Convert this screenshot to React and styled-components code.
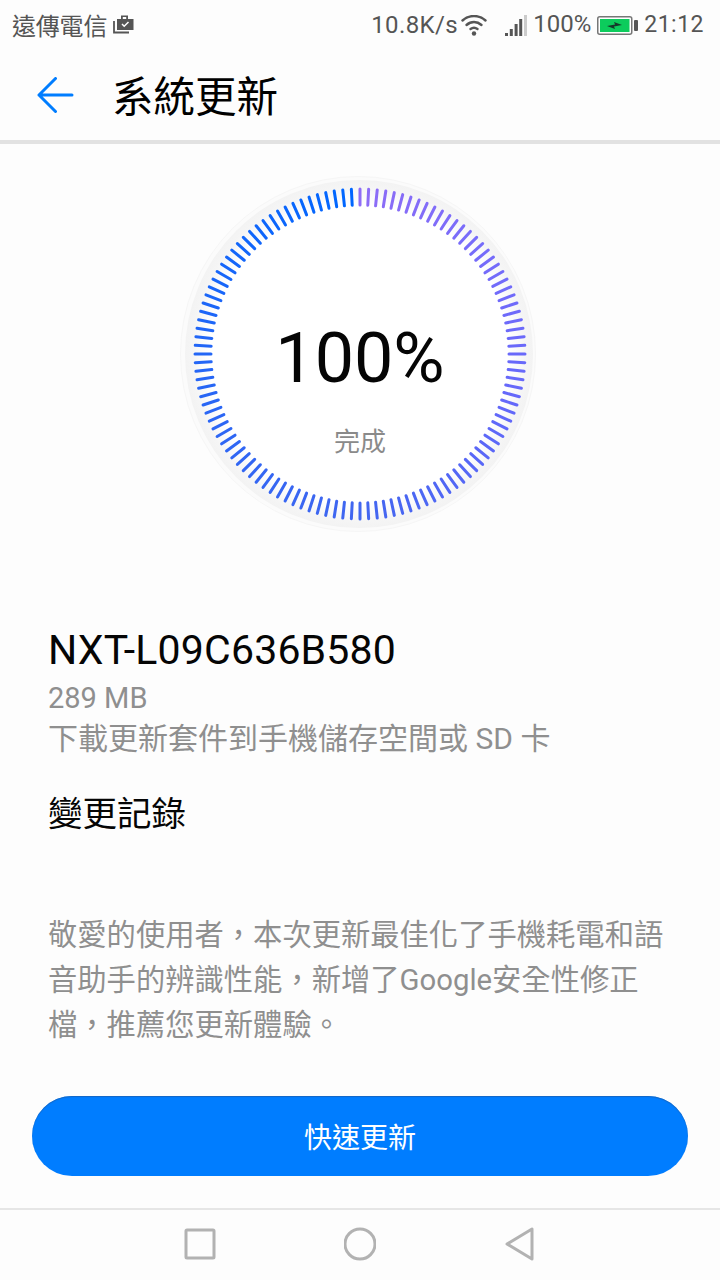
import React from 'react';
import styled, { createGlobalStyle } from 'styled-components';

const FONT = `"Noto Sans CJK TC", "Noto Sans CJK SC", Roboto, sans-serif`;

const Global = createGlobalStyle`
  html, body { margin: 0; padding: 0; background: #fdfdfd; }
  body { font-family: Roboto, ${FONT}; }
`;
const Screen = styled.div`
  width: 720px; height: 1280px; background: #fdfdfd; display: flex; flex-direction: column; overflow: hidden;
`;
const StatusBar = styled.div`
  height: 50px; padding: 0 16px 0 12px; display: flex; align-items: center; justify-content: space-between;
  color: #555; box-sizing: border-box;
`;
const StatusGroup = styled.div`display: flex; align-items: center; gap: 6px;`;
const Carrier = styled.span`font: 400 24px/50px ${FONT}; letter-spacing: -0.2px;`;
const StatusText = styled.span`
  font: 400 ${p => p.$size || 24}px/50px Roboto, sans-serif; letter-spacing: ${p => p.$ls || 0}px;
  margin-top: ${p => p.$mt || 0}px;
`;
const IconSlot = styled.span`display: flex; margin-left: ${p => p.$ml || 0}px;`;
const Header = styled.header`
  height: 90px; display: flex; align-items: center; padding: 0 0 0 36px; gap: 38px;
  border-bottom: 4px solid #e2e2e2;
`;
const Title = styled.h1`margin: 0; font: 400 41.5px/1 ${FONT}; color: #000;`;
const Main = styled.main`flex: 1; display: flex; flex-direction: column; padding: 30px 32px 0;`;
const GaugeWrap = styled.div`position: relative; width: 360px; height: 360px; align-self: center;`;
const GaugeCenter = styled.div`
  position: absolute; inset: 0; display: flex; flex-direction: column; align-items: center;
`;
const Percent = styled.div`font: 400 70px/1 Roboto, sans-serif; color: #050505; margin-top: 149px;`;
const Done = styled.div`font: 400 26px/1 ${FONT}; color: #8a8a8a; margin-top: 34px;`;
const Info = styled.section`display: flex; flex-direction: column; padding-left: 16px; margin-top: 91px;`;
const Version = styled.div`font: 400 41px/50px Roboto, sans-serif; letter-spacing: 0.2px; color: #050505;`;
const Size = styled.div`font: 400 29px/44px Roboto, sans-serif; color: #8f8f8f; margin-top: 1px;`;
const Hint = styled.div`font: 400 30px/44px Roboto, ${FONT}; color: #8f8f8f; margin-top: -3px;`;
const ChangeTitle = styled.div`font: 400 34.5px/40px ${FONT}; color: #050505; margin-top: 30px;`;
const Notes = styled.p`font: 400 29.3px/45px Roboto, ${FONT}; color: #8f8f8f; margin: 82px 0 0; width: 625px;`;
const PrimaryButton = styled.button`
  height: 80px; margin-top: 48px; border: 0; border-radius: 40px; background: #007dff;
  box-shadow: inset 0 1px 1px #1467c4; color: #fff; font: 400 28px/1 ${FONT}; width: 656px; flex-shrink: 0;
`;
const NavBar = styled.nav`
  height: 68px; padding-bottom: 2px; border-top: 2px solid #e6e6e6; display: flex; align-items: center; justify-content: center; gap: 128px;
`;
const NavIcon = styled.svg`width: 32px; height: 36px; fill: none; stroke: #b2b2b2; stroke-width: 3; stroke-linejoin: round;`;

const mix = (a, b, t) => a.map((v, i) => Math.round(v + (b[i] - v) * t));
const stops = [[0, [142, 108, 246]], [0.12, [120, 108, 250]], [0.3, [100, 104, 250]], [0.5, [66, 102, 240]], [0.75, [36, 102, 246]], [1, [0, 102, 255]]];
const colorAt = t => {
  for (let i = 1; i < stops.length; i++) {
    if (t <= stops[i][0]) {
      const [a, ca] = stops[i - 1]; const [b, cb] = stops[i];
      return `rgb(${mix(ca, cb, (t - a) / (b - a)).join(',')})`;
    }
  }
  return 'rgb(0,102,255)';
};

const Gauge = () => {
  const ticks = [];
  const n = 120;
  for (let i = 0; i < n; i++) {
    const ang = (i * 3 * Math.PI) / 180;
    const s = Math.sin(ang), c = Math.cos(ang);
    ticks.push(<line key={i} x1={180 + s * 149} y1={180 - c * 149} x2={180 + s * 165} y2={180 - c * 165}
      stroke={colorAt(i / (n - 1))} strokeWidth="3" strokeLinecap="round" />);
  }
  return (
    <svg width="360" height="360" viewBox="0 0 360 360">
      <defs>
        <radialGradient id="band" gradientUnits="userSpaceOnUse" cx="179" cy="180" r="174">
          <stop offset="0.86" stopColor="#ffffff" />
          <stop offset="0.96" stopColor="#f5f5f5" />
          <stop offset="1" stopColor="#f3f3f3" />
        </radialGradient>
      </defs>
      <circle cx="178" cy="180" r="177.5" fill="#fbfbfb" stroke="#f6f6f6" strokeWidth="1" />
      <circle cx="179" cy="180" r="174" fill="url(#band)" />
      {ticks}
    </svg>
  );
};

const Wifi = () => (
  <svg width="26" height="21" viewBox="0 0 26 21" fill="none" stroke="#555" strokeWidth="2.4" strokeLinecap="round">
    <path d="M1.5 5.5C8 -0.5 18 -0.5 24.5 5.5" />
    <path d="M5.5 10C10 6 16 6 20.5 10" />
    <path d="M9.5 14C11.5 12.5 14.5 12.5 16.5 14" />
    <circle cx="13" cy="18.5" r="2.2" fill="#555" stroke="none" />
  </svg>
);
const Signal = () => (
  <svg width="22" height="21" viewBox="0 0 22 21">
    <rect x="0" y="18" width="3" height="3" fill="#555" />
    <rect x="4.8" y="14" width="3" height="7" fill="#555" />
    <rect x="9.6" y="9" width="3" height="12" fill="#555" />
    <rect x="14.2" y="4" width="3" height="17" fill="#555" />
    <rect x="19" y="0" width="3" height="21" fill="#ccc" />
  </svg>
);
const Battery = () => (
  <svg width="41" height="19" viewBox="0 0 41 19">
    <rect x="0.75" y="0.75" width="34" height="17.5" rx="2" fill="#fff" stroke="#777" strokeWidth="1.5" />
    <rect x="3" y="3" width="29.5" height="13" fill="#0ccc5c" />
    <rect x="37" y="4" width="4" height="11" rx="1" fill="#555" />
    <path d="M10 10L18 8.5L17 6L25 9L17 10.6L18 13Z" fill="#16382a" />
  </svg>
);
const Briefcase = () => (
  <svg width="21" height="20" viewBox="0 0 21 20">
    <path d="M1 6V17.5H16" fill="none" stroke="#555" strokeWidth="1.8" />
    <path d="M4 4H8V0.5H15V4H20.5V15H4Z" fill="#555" />
    <path d="M9 9L11.2 11.2L15.5 7" fill="none" stroke="#fff" strokeWidth="1.5" />
    <rect x="9.8" y="2" width="3.4" height="2" fill="#fdfdfd" />
  </svg>
);
const Back = () => (
  <svg width="38" height="36" viewBox="0 0 38 36" fill="none" stroke="#007dff" strokeWidth="3" strokeLinecap="round" strokeLinejoin="round">
    <path d="M36 18H3M19.5 1.5L3 18L19.5 34.5" />
  </svg>
);

export default function App() {
  return (
    <Screen>
      <Global />
      <StatusBar>
        <StatusGroup>
          <Carrier>遠傳電信</Carrier>
          <Briefcase />
        </StatusGroup>
        <StatusGroup>
          <StatusText $ls={0.4}>10.8K/s</StatusText>
          <IconSlot $ml={-3}><Wifi /></IconSlot>
          <IconSlot $ml={12}><Signal /></IconSlot>
          <StatusText $mt={-3}>100%</StatusText>
          <Battery />
          <StatusText $size={23} $ls={0.5}>21:12</StatusText>
        </StatusGroup>
      </StatusBar>
      <Header>
        <Back />
        <Title>系統更新</Title>
      </Header>
      <Main>
        <GaugeWrap>
          <Gauge />
          <GaugeCenter>
            <Percent>100%</Percent>
            <Done>完成</Done>
          </GaugeCenter>
        </GaugeWrap>
        <Info>
          <Version>NXT-L09C636B580</Version>
          <Size>289 MB</Size>
          <Hint>下載更新套件到手機儲存空間或 SD 卡</Hint>
          <ChangeTitle>變更記錄</ChangeTitle>
          <Notes>敬愛的使用者，本次更新最佳化了手機耗電和語音助手的辨識性能，新增了Google安全性修正檔，推薦您更新體驗。</Notes>
        </Info>
        <PrimaryButton>快速更新</PrimaryButton>
      </Main>
      <NavBar>
        <NavIcon viewBox="0 0 32 36"><rect x="2" y="4" width="28" height="28" rx="1" /></NavIcon>
        <NavIcon viewBox="0 0 32 36"><circle cx="16" cy="18" r="15" /></NavIcon>
        <NavIcon viewBox="0 0 32 36"><path d="M28 3V33L3 18Z" /></NavIcon>
      </NavBar>
    </Screen>
  );
}
